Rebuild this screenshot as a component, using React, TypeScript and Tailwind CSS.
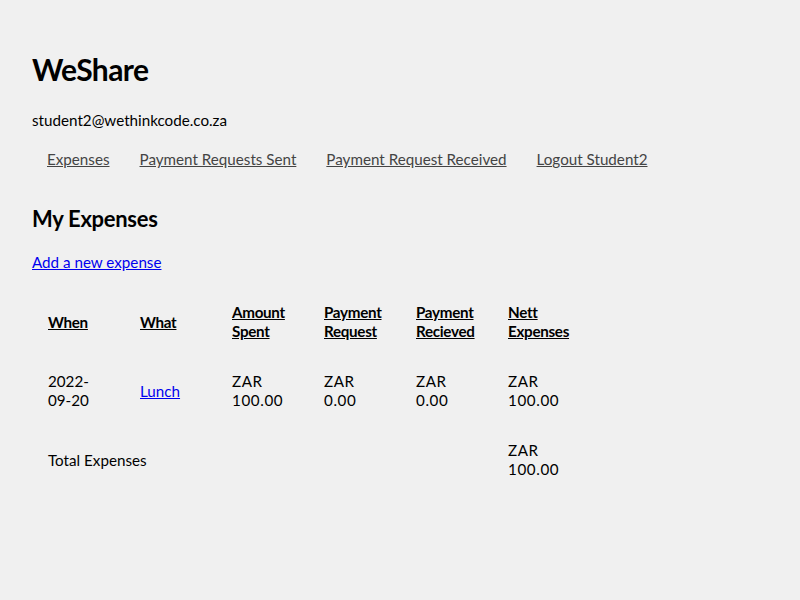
import React from "react";

export default function App() {
  const th = "px-4 py-[15px] align-middle";
  const td = "px-4 pt-[16px] pb-[15px] align-middle";
  return (
    <div className="min-h-[600px] bg-[#f0f0f0] text-black px-8 pt-[47px]" style={{ fontFamily: "Lato, 'Liberation Sans', sans-serif" }}>
      <h1 className="text-[30px] font-bold leading-[44px] tracking-[-0.6px]">WeShare</h1>
      <div className="mt-[18px] text-[15.2px] leading-[22px]">student2@wethinkcode.co.za</div>
      <nav className="mt-[17px] flex text-[15.2px] leading-[22px]">
        <a href="#" className="px-[15px] text-[#444] underline">Expenses</a>
        <a href="#" className="px-[15px] text-[#444] underline">Payment Requests Sent</a>
        <a href="#" className="px-[15px] text-[#444] underline">Payment Request Received</a>
        <a href="#" className="px-[15px] text-[#444] underline">Logout Student2</a>
      </nav>
      <h2 className="mt-[34px] text-[22px] font-bold leading-[30px] tracking-[-0.3px]">My Expenses</h2>
      <a href="#" className="mt-[17px] block w-fit text-[15.2px] leading-[22px] text-[#0000ee] underline">Add a new expense</a>
      <table className="mt-[15px] w-[552px] table-fixed border-collapse text-[15.2px] leading-[19px]">
        <colgroup>
          <col className="w-[92px]" />
          <col className="w-[92px]" />
          <col className="w-[92px]" />
          <col className="w-[92px]" />
          <col className="w-[92px]" />
          <col className="w-[92px]" />
        </colgroup>
        <thead>
          <tr>
            {["When", "What", "Amount Spent", "Payment Request", "Payment Recieved", "Nett Expenses"].map((h) => (
              <th key={h} className={`${th} text-left font-bold tracking-[-0.3px]`}>
                <span className="underline">{h}</span>
              </th>
            ))}
          </tr>
        </thead>
        <tbody>
          <tr>
            <td className={td}>2022-09-20</td>
            <td className={td}>
              <a href="#" className="text-[#0000ee] underline">Lunch</a>
            </td>
            <td className={`${td} tracking-[0.6px]`}>ZAR 100.00</td>
            <td className={`${td} tracking-[0.6px]`}>ZAR 0.00</td>
            <td className={`${td} tracking-[0.6px]`}>ZAR 0.00</td>
            <td className={`${td} tracking-[0.6px]`}>ZAR 100.00</td>
          </tr>
          <tr>
            <td colSpan={5} className={td}>Total Expenses</td>
            <td className={`${td} tracking-[0.6px]`}>ZAR 100.00</td>
          </tr>
        </tbody>
      </table>
    </div>
  );
}
